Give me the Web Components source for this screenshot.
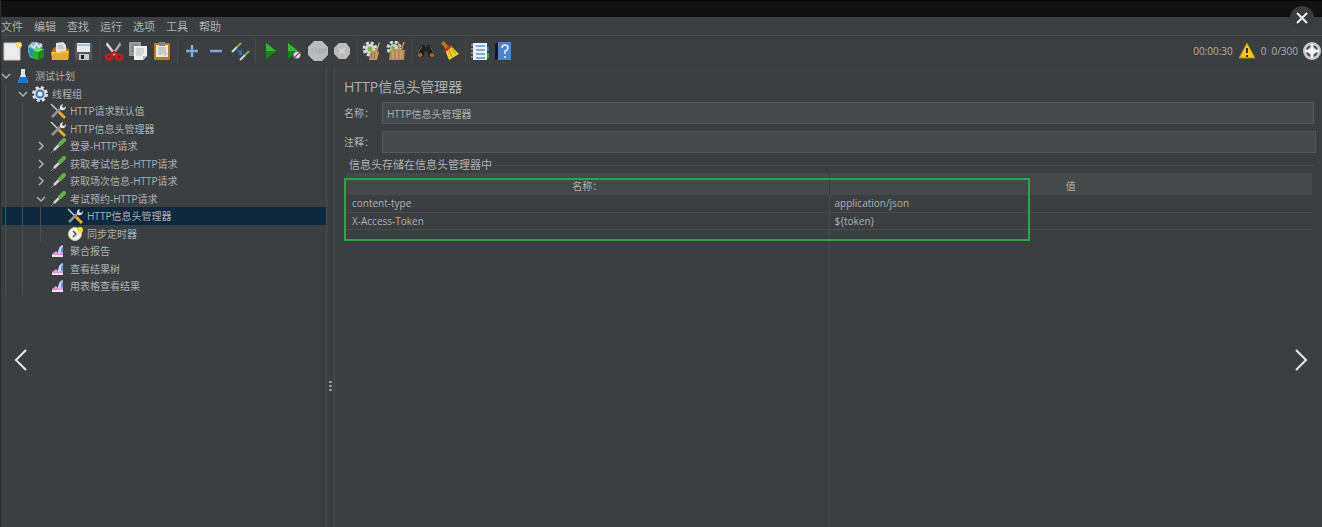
<!DOCTYPE html>
<html lang="zh-CN">
<head>
<meta charset="utf-8">
<meta name="viewport" content="width=device-width, initial-scale=1">
<title>HTTP信息头管理器</title>
<style>
  :root {
    --bg: #3c3f41;
    --text: #adafb1;
    --line: #494b4d;
    --field: #45494a;
    --small: 10px;
    --normal: 11px;
  }

  body {
    background: var(--bg);
    color: var(--text);
    font-family: "Open Sans", "Noto Sans CJK SC", sans-serif;
    font-size: var(--normal);
    line-height: 16px;
    margin: 0;
  }
</style>
</head>
<body>
<plan-window></plan-window>

<script>
const icons = {
  new: [20, `<path d="M2 2h16v17H2z" fill="#ececec"/><path d="M2 2h16v17H2z" fill="none" stroke="#c9c9c9"/><circle cx="17" cy="4" r="3" fill="#e9d94c"/><circle cx="17" cy="4" r="1" fill="#fffbd0"/>`],
  templates: [20, `<path d="M2 5l4-4 9 1 2 4-8 4v8l-5-2-2-5z" fill="#8fb5c4"/><path d="M2 6l7 3v9l-5-3z" fill="#2391ad"/><path d="M5 4l3 3 2-5 3 4 3-3" fill="none" stroke="#dbe8ec" stroke-width="1.5"/><path d="M7 9l5-2 6 1v8l-6 3-5-2z" fill="#25b728"/><path d="M12 11l6-3v8l-6 3z" fill="#0f8d18"/><path d="M7 9l5-2 6 1-6 3z" fill="#70e45d"/>`],
  open: [20, `<path d="M2 9l3-3h11l3 3v9H2z" fill="#b77b17"/><path d="M6 2l7-1 3 3v8H6z" fill="#e2e2e2"/><path d="M8 5h5M8 7h6" stroke="#aaa"/><path d="M1 11h9l2-1h7l-1 9H2z" fill="#e5a92d"/><path d="M2 12h8l2-1h6" fill="none" stroke="#f8d070"/>`],
  save: [20, `<path d="M1 2h17v16l-1 1H3l-2-2z" fill="#55585d"/><path d="M3 2h13v9H3z" fill="#e3ebf1"/><path d="M3 3h13v2H3z" fill="#a5c2d6"/><path d="M5 13h10v6H5z" fill="#c3c5c7"/><path d="M7 14h3v4H7z" fill="#222"/>`],
  cut: [20, `<path d="M3 1l10 13-2 1L2 4z" fill="#dadada"/><path d="M16 1L7 14l2 1 8-11z" fill="#a9abad"/><ellipse cx="5" cy="16" rx="3" ry="2.5" fill="none" stroke="#d31616" stroke-width="2.5"/><ellipse cx="15" cy="16" rx="3" ry="2.5" fill="none" stroke="#d31616" stroke-width="2.5"/><path d="M6 14l4-3 4 3" fill="none" stroke="#d31616" stroke-width="2.5"/>`],
  copy: [20, `<path d="M1 1h12v14H1z" fill="#979a99"/><path d="M3 4h7M3 7h7M3 10h5" stroke="#777"/><path d="M6 5h13v10l-4 4H6z" fill="#efefed"/><path d="M8 8h8M8 10h8M8 12h8M8 14h6" stroke="#b9bab8"/><path d="M15 19v-4h4z" fill="#b9bab8"/>`],
  paste: [20, `<rect x="2" y="2" width="16" height="17" rx="1" fill="#b97b1c"/><path d="M4 4h12v12H4z" fill="#e9e9e6"/><path d="M7 1h6v4H7z" fill="#868884"/><path d="M6 7h8M6 9h8M6 11h8M6 13h5" stroke="#a7a8a6"/><path d="M12 16v-4h4z" fill="#c5c6c4"/>`],
  plus: [20, `<path d="M4 10h12M10 4v12" stroke="#7ba8df" stroke-width="2.5"/>`],
  minus: [20, `<path d="M4 10h12" stroke="#7ba8df" stroke-width="2.5"/>`],
  toggle: [20, `<path d="M2 11l5-5M10 19l5-5" stroke="#d5d8d5" stroke-width="2"/><path d="M7 6l4-4M15 14l4-4" stroke="#71ae4c" stroke-width="2"/><path d="M6 8l5 4" stroke="#3575c9" stroke-width="1.5"/><path d="M12 8v6H8z" fill="#3575c9"/>`],
  run: [20, `<path d="M6 2v16l10-8z" fill="#0c8f12"/><path d="M6 2v8h10z" fill="#2fbb2c"/>`],
  runNoTimers: [20, `<path d="M4 2v16l10-8z" fill="#0c8f12"/><path d="M4 2v8h10z" fill="#2fbb2c"/><circle cx="13" cy="14" r="3.5" fill="#e7edf7" stroke="#5183c7"/><path d="M10 17l6-6" stroke="#d03a3a" stroke-width="1.5"/>`],
  stop: [20, `<path d="M6 0h8l6 6v8l-6 6H6l-6-6V6z" fill="#bbb"/><path d="M3 8h3M4 8v4M8 8v4M11 8h3v4h-3zM16 12V8h2v2h-2" fill="none" stroke="#aaa"/>`],
  shutdown: [20, `<path d="M7 2h7l4 5v6l-4 5H7l-5-5V7z" fill="#bbb"/><path d="M7 7l6 6M13 7l-6 6" stroke="#d6d6d6" stroke-width="1.5"/>`],
  clear: [20, `<circle cx="8" cy="8" r="6" fill="none" stroke="#d9dbd8" stroke-width="3" stroke-dasharray="3 1.7"/><circle cx="8" cy="8" r="5" fill="#d5d8d3"/><circle cx="8" cy="8" r="2.5" fill="#75b73a"/><path d="M17 1l1 1-3 9-2-1z" fill="#c29260"/><path d="M9 9l8 2-2 8H7z" fill="#c39a66"/><path d="M10 11l-1 7M13 11l-1 7" stroke="#906b40"/>`],
  clearAll: [20, `<circle cx="8" cy="7" r="6" fill="none" stroke="#d9dbd8" stroke-width="3" stroke-dasharray="3 1.7"/><circle cx="8" cy="7" r="4" fill="#cfd3ca"/><circle cx="7" cy="7" r="2" fill="#75b73a"/><path d="M12 1l2 8M18 1l-3 9" stroke="#c29260" stroke-width="1.5"/><path d="M4 10l5-2 10 1-1 10H3z" fill="#b48a5a"/><path d="M7 10v8M11 10v8M15 10v8" stroke="#d6b17c"/>`],
  search: [20, `<path d="M5 4h3l2 3 2-3h3l4 9-3 3h-3l-2-6h-2l-2 6H3l-2-3z" fill="#1d1f20"/><path d="M6 5l-4 7M14 5l4 7" stroke="#6b6b6b"/><ellipse cx="4" cy="14" rx="2.5" ry="2" fill="#a55f27"/><ellipse cx="16" cy="14" rx="2.5" ry="2" fill="#a55f27"/>`],
  broom: [20, `<path d="M1 2l3-2 6 7-3 3z" fill="#b87524"/><path d="M5 9l6-4 8 8-10 6z" fill="#edd024"/><path d="M9 9l3 7M12 8l4 5" stroke="#b79513"/><path d="M5 10l6-5" stroke="#d22b1b" stroke-width="2.5"/>`],
  list: [20, `<path d="M3 2h14v17H3z" fill="#eef2f5"/><path d="M6 5h9M6 9h9M6 13h9M6 17h9" stroke="#5a91d7" stroke-width="1.5"/><path d="M1 4h4M1 8h4M1 12h4M1 16h4" stroke="#d5d7d7"/><path d="M17 6h2v4h-2z" fill="#3273c7"/><path d="M17 12h2v5h-2z" fill="#29a843"/>`],
  help: [20, `<path d="M1 3l3-2v17l-3 1z" fill="#16191c"/><path d="M4 1h13v18H4z" fill="#4884d2"/><path d="M8 7q0-3 3-3t3 3q0 2-3 3v3M11 15v2" fill="none" stroke="#e9f0f8" stroke-width="1.5"/>`],
  warning: [18, `<path d="M9 1l8 15H1z" fill="#f0cc13" stroke="#a68c12" stroke-linejoin="round"/><path d="M9 6v5M9 13v2" stroke="#332d0d" stroke-width="2"/>`],
  target: [18, `<circle cx="9" cy="9" r="9" fill="#c9c9c9"/><circle cx="9" cy="9" r="5" fill="none" stroke="#3c3f41" stroke-width="2"/><path d="M9 2v14M2 9h14" stroke="#eee" stroke-width="3"/><path d="M9 6v6M6 9h6" stroke="#fff" stroke-width="2"/>`],
  flask: [16, `<path d="M6 1h4v5l3 8q0 1-1 1H4q-1 0-1-1l3-8z" fill="#d9e5ed"/><path d="M5 9h6l2 5q0 1-1 1H4q-1 0-1-1z" fill="#1776d1"/>`],
  gear: [16, `<circle cx="8" cy="8" r="6.5" fill="none" stroke="#dce1e6" stroke-width="3" stroke-dasharray="3 2.1"/><circle cx="8" cy="8" r="6" fill="#dce1e6"/><circle cx="8" cy="8" r="3.5" fill="#e7f0fa" stroke="#3f6fae" stroke-width="2"/>`],
  tools: [16, `<path d="M1 1l9 9" stroke="#c9cbcb" stroke-width="1.5"/><path d="M9 9l6 6" stroke="#e4ae1a" stroke-width="3"/><path d="M2 14l8-8" stroke="#8f9393" stroke-width="2.5"/><path d="M10 6q-1-4 3-5l-1 3 2 1 2-2q0 5-5 4z" fill="#e1e3e3"/>`],
  sampler: [16, `<path d="M1 15l4-4" stroke="#888b88"/><path d="M4 12l7-7" stroke="#cfd3ce" stroke-width="2.5"/><path d="M10 6l4-4" stroke="#66ab50" stroke-width="4" stroke-linecap="round"/>`],
  clock: [16, `<circle cx="8" cy="8" r="6.5" fill="#f2f1e7" stroke="#c4c4bb"/><path d="M6 5l3 3-3 3" fill="none" stroke="#555" stroke-width="1.5"/><circle cx="13" cy="4" r="3" fill="#f0df2e"/>`],
  chart: [16, `<path d="M8 9q1-6 5-7v9H8z" fill="#c3dcf3"/><path d="M11 6l2-3v8h-2z" fill="#5d91cd"/><path d="M2 11l4-3 3 3 4-2v5H2z" fill="#ea8fd8"/><path d="M2 13h11" stroke="#f6dcf3" stroke-width="2"/>`],
  right: [12, `<path d="M4 2l4 4-4 4" fill="none" stroke="#adafb1" stroke-width="1.5"/>`],
  down: [12, `<path d="M2 4l4 4 4-4" fill="none" stroke="#adafb1" stroke-width="1.5"/>`],
  close: [24, `<path d="M7 7l10 10M17 7L7 17" stroke="#eee" stroke-width="2"/>`],
  previous: [24, `<path d="M17 2L7 12l10 10" fill="none" stroke="#e8e8e8" stroke-width="2"/>`],
  next: [24, `<path d="M7 2l10 10L7 22" fill="none" stroke="#e8e8e8" stroke-width="2"/>`]
}

const resetStyles = /* css */`
  *, :host { box-sizing: border-box; }
  button {
    align-items: center;
    background: none;
    border: 0;
    color: inherit;
    display: flex;
    font: inherit;
    justify-content: center;
    padding: 0;
  }
`

class BaseElement extends HTMLElement {
  constructor () {
    super()
    this.attachShadow({ mode: 'open' })
  }

  connectedCallback () {
    this.shadowRoot.innerHTML = `<style>${resetStyles}${this.styles()}</style>${this.render()}`
  }
}

class AppIcon extends BaseElement {
  styles () {
    return ':host { display: block; flex: none; } svg { display: block; }'
  }

  render () {
    const [size, shapes] = icons[this.getAttribute('name')]
    return `<svg width="${size}" height="${size}" viewBox="0 0 ${size} ${size}" aria-hidden="true">${shapes}</svg>`
  }
}

class MenuBar extends BaseElement {
  styles () {
    return `
      :host { border-bottom: 1px solid var(--line); display: block; padding-top: 2px; }
      nav { display: flex; gap: 11px; }
    `
  }

  render () {
    const items = ['文件', '编辑', '查找', '运行', '选项', '工具', '帮助']
    return `<nav>${items.map(item => `<button>${item}</button>`).join('')}</nav>`
  }
}

class ToolGroup extends BaseElement {
  styles () {
    return `
      :host { display: flex; }
      :host(:not(:first-of-type)) { border-left: 1px solid var(--line); margin-left: 3px; padding-left: 2px; }
      button { height: 24px; width: 24px; }
      :host(:first-of-type) button:first-child { justify-content: flex-start; }
    `
  }

  render () {
    return this.getAttribute('tools').split(' ').map(name => /* html */`
      <button aria-label="${name}"><app-icon name="${name}"></app-icon></button>
    `).join('')
  }
}

class ToolBar extends BaseElement {
  styles () {
    return `
      :host { align-items: center; border-bottom: 1px solid #37393b; display: flex; padding: 3px 1px 3px 0; }
      .tools { display: flex; margin-left: -1px; }
      .status { align-items: center; display: flex; font-size: var(--small); gap: 5px; margin-left: auto; }
    `
  }

  render () {
    return /* html */`
      <div class="tools">
        <tool-group tools="new templates open save"></tool-group>
        <tool-group tools="cut copy paste"></tool-group>
        <tool-group tools="plus minus toggle"></tool-group>
        <tool-group tools="run runNoTimers stop shutdown"></tool-group>
        <tool-group tools="clear clearAll"></tool-group>
        <tool-group tools="search broom"></tool-group>
        <tool-group tools="list help"></tool-group>
      </div>
      <div class="status">
        <span>00:00:30</span>
        <button aria-label="warnings"><app-icon name="warning"></app-icon></button>
        <span>0</span>
        <span>0/300</span>
        <app-icon name="target"></app-icon>
      </div>
    `
  }
}

class TreeRow extends BaseElement {
  styles () {
    return `
      :host { align-items: center; display: flex; white-space: nowrap; }
      :host([level="1"]) { padding-left: 17px; }
      :host([level="2"]) { padding-left: 35px; }
      :host([level="3"]) { padding-left: 52px; }
      :host([level="1"]) { background: var(--guide) 3px 0 / 1px 100% no-repeat; }
      :host([level="2"]) { background: var(--guide) 3px 0 / 1px 100% no-repeat, var(--guide) 20px 0 / 1px 100% no-repeat; }
      :host([level="3"]) {
        background: var(--guide) 3px 0 / 1px 100% no-repeat, var(--guide) 20px 0 / 1px 100% no-repeat,
          var(--guide) 38px 0 / 1px 100% no-repeat;
      }
      :host([aria-selected]) { background-color: #0d293e; }
      .toggle { flex: none; height: 12px; margin: 0 3px 0 -2px; width: 12px; }
      app-icon { margin-right: 4px; }
      .toggle app-icon { margin: 0; }
    `
  }

  render () {
    const toggle = this.getAttribute('toggle')
    return /* html */`
      ${toggle
        ? `<button class="toggle" aria-label="${toggle}"><app-icon name="${toggle}"></app-icon></button>`
        : '<span class="toggle"></span>'}
      <app-icon name="${this.getAttribute('icon')}"></app-icon>
      <slot></slot>
    `
  }
}

class PlanTree extends BaseElement {
  styles () {
    return `
      :host {
        --guide: linear-gradient(#4a4d4f, #4a4d4f);
        display: grid;
        font-size: var(--small);
        grid-auto-rows: 18px 17px;
        padding-left: 1px;
      }
    `
  }

  render () {
    return /* html */`
      <tree-row level="0" icon="flask" toggle="down">测试计划</tree-row>
      <tree-row level="1" icon="gear" toggle="down">线程组</tree-row>
      <tree-row level="2" icon="tools">HTTP请求默认值</tree-row>
      <tree-row level="2" icon="tools">HTTP信息头管理器</tree-row>
      <tree-row level="2" icon="sampler" toggle="right">登录-HTTP请求</tree-row>
      <tree-row level="2" icon="sampler" toggle="right">获取考试信息-HTTP请求</tree-row>
      <tree-row level="2" icon="sampler" toggle="right">获取场次信息-HTTP请求</tree-row>
      <tree-row level="2" icon="sampler" toggle="down">考试预约-HTTP请求</tree-row>
      <tree-row level="3" icon="tools" aria-selected="true">HTTP信息头管理器</tree-row>
      <tree-row level="3" icon="clock">同步定时器</tree-row>
      <tree-row level="2" icon="chart">聚合报告</tree-row>
      <tree-row level="2" icon="chart">查看结果树</tree-row>
      <tree-row level="2" icon="chart">用表格查看结果</tree-row>
    `
  }
}

class SplitHandle extends BaseElement {
  styles () {
    return `
      :host {
        align-items: center;
        border: solid var(--line);
        border-width: 0 1px;
        display: flex;
        flex-direction: column;
        gap: 2px;
      }
      :host::before { content: ""; flex: 7; }
      :host::after { content: ""; flex: 3; }
      i { background: #a5a5a5; border-radius: 1px; height: 2px; width: 3px; }
    `
  }

  render () {
    return '<i></i><i></i><i></i>'
  }
}

class TextField extends BaseElement {
  styles () {
    return `
      :host { align-items: center; display: flex; font-size: var(--small); }
      label { flex: none; width: 38px; }
      input {
        background: var(--field);
        border: 1px solid #55585a;
        color: inherit;
        flex: 1;
        font: inherit;
        height: 22px;
        min-width: 0;
        outline: 0;
        padding: 0 4px;
      }
    `
  }

  render () {
    return /* html */`
      <label for="field">${this.getAttribute('label')}</label>
      <input id="field" type="text" value="${this.getAttribute('value') || ''}">
    `
  }
}

class HeaderTable extends BaseElement {
  styles () {
    return `
      :host {
        background: linear-gradient(var(--line), var(--line)) 50% 0 / 1px 100% no-repeat;
        display: block;
        flex: 1;
        font-size: var(--small);
        position: relative;
      }
      table { border-collapse: collapse; table-layout: fixed; width: 100%; }
      th { background: var(--field); font-weight: normal; height: 22px; padding: 4px 0 0; }
      th + th { border-left: 1px solid #393c3e; }
      td { border-bottom: 1px solid var(--line); height: 17px; padding: 0 6px; }
      td + td { border-left: 1px solid var(--line); padding: 0 5px; }
      /* highlight drawn over the filled rows */
      .mark {
        border: 2px solid #27a548;
        height: 63px;
        left: -2px;
        pointer-events: none;
        position: absolute;
        top: 5px;
        width: 71%;
      }
    `
  }

  render () {
    return /* html */`
      <table>
        <thead><tr><th>名称：</th><th>值</th></tr></thead>
        <tbody>
          <tr><td>content-type</td><td>application/json</td></tr>
          <tr><td>X-Access-Token</td><td>\${token}</td></tr>
        </tbody>
      </table>
      <div class="mark"></div>
    `
  }
}

class HeaderPanel extends BaseElement {
  styles () {
    return `
      :host { display: flex; flex-direction: column; min-width: 0; padding: 10px 6px 0 9px; }
      h1 { font-size: 14px; font-weight: normal; line-height: 20px; margin: 0 0 5px; }
      text-field { margin-bottom: 7px; }
      .name { margin-right: 2px; }
      .legend { align-items: center; display: flex; gap: 4px; margin: -3px 2px 0 1px; }
      .legend::before, .legend::after { border-top: 1px solid var(--line); content: ""; }
      .legend::after { flex: 1; }
      header-table { margin: 0 4px 0 2px; }
    `
  }

  render () {
    return /* html */`
      <h1>HTTP信息头管理器</h1>
      <text-field class="name" label="名称：" value="HTTP信息头管理器"></text-field>
      <text-field label="注释："></text-field>
      <div class="legend">信息头存储在信息头管理器中</div>
      <header-table></header-table>
    `
  }
}

class OverlayButton extends BaseElement {
  styles () {
    return `
      :host { display: block; position: absolute; }
      :host([icon="close"]) { background: #3a3b3c; border-radius: 50%; right: 8px; top: 6px; }
      :host([icon="previous"]) { bottom: 155px; left: 8px; }
      :host([icon="next"]) { bottom: 155px; right: 9px; }
      button { height: 24px; width: 24px; }
    `
  }

  render () {
    const icon = this.getAttribute('icon')
    return `<button aria-label="${icon}"><app-icon name="${icon}"></app-icon></button>`
  }
}

class PlanWindow extends BaseElement {
  styles () {
    return `
      :host {
        border-left: 1px solid #2a2c2e;
        display: flex;
        flex-direction: column;
        min-height: 100vh;
        position: relative;
      }
      header { background: #111; border-top: 1px solid #060606; height: 17px; }
      main { display: grid; flex: 1; grid-template-columns: 325px 9px minmax(0, 1fr); }
      plan-tree { align-content: start; }
    `
  }

  render () {
    return /* html */`
      <header></header>
      <menu-bar></menu-bar>
      <tool-bar></tool-bar>
      <main>
        <plan-tree></plan-tree>
        <split-handle></split-handle>
        <header-panel></header-panel>
      </main>
      <overlay-button icon="close"></overlay-button>
      <overlay-button icon="previous"></overlay-button>
      <overlay-button icon="next"></overlay-button>
    `
  }
}

customElements.define('app-icon', AppIcon)
customElements.define('menu-bar', MenuBar)
customElements.define('tool-group', ToolGroup)
customElements.define('tool-bar', ToolBar)
customElements.define('tree-row', TreeRow)
customElements.define('plan-tree', PlanTree)
customElements.define('split-handle', SplitHandle)
customElements.define('text-field', TextField)
customElements.define('header-table', HeaderTable)
customElements.define('header-panel', HeaderPanel)
customElements.define('overlay-button', OverlayButton)
customElements.define('plan-window', PlanWindow)
</script>
</body>
</html>
